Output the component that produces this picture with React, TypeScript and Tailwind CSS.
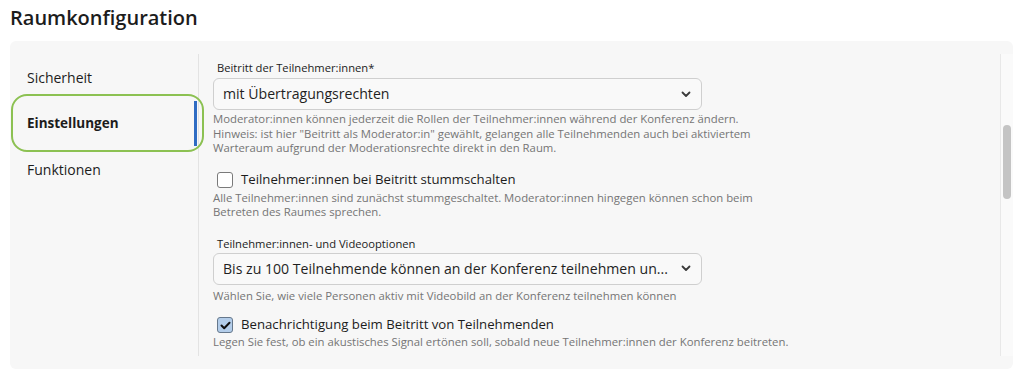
import React from 'react';

const font = { fontFamily: '"Open Sans", "Noto Sans", sans-serif' };

const Chevron = () => (
  <svg width="10" height="7" viewBox="0 0 10 7" fill="none" className="shrink-0">
    <path d="M1.5 1.5L5 5L8.5 1.5" stroke="#3a3a3a" strokeWidth="1.8" strokeLinecap="round" strokeLinejoin="round" />
  </svg>
);

const Select = ({ value }: { value: string }) => (
  <div className="w-[489px] h-[32px] rounded-[6px] border border-[#cfcfcf] bg-[#f9f9f9] flex items-center justify-between pl-[9px] pr-[10px]">
    <span className="text-[14.1px] text-[#1f1f1f] whitespace-nowrap">{value}</span>
    <Chevron />
  </div>
);

const Checkbox = ({ checked }: { checked?: boolean }) =>
  checked ? (
    <span className="w-[16px] h-[16px] rounded-[3px] border border-[#66788c] bg-[#b3cdea] flex items-center justify-center shrink-0">
      <svg width="11" height="9" viewBox="0 0 11 9" fill="none">
        <path d="M1.5 4.5L4.2 7.2L9.5 1.8" stroke="#111" strokeWidth="2" strokeLinecap="round" strokeLinejoin="round" />
      </svg>
    </span>
  ) : (
    <span className="w-[16px] h-[16px] rounded-[3px] border border-[#7a7a7a] bg-white shrink-0" />
  );

const Help = ({ lines }: { lines: string[] }) => (
  <div className="text-[11.35px] leading-[14.5px] text-[#757575]">
    {lines.map((l) => (
      <div key={l}>{l}</div>
    ))}
  </div>
);

export default function App() {
  return (
    <div className="w-[1024px] h-[380px] bg-white text-[#1c1c1c] overflow-hidden" style={font}>
      <h1 className="px-[10px] pt-[3px] h-[41px] text-[20px] leading-[30px] font-semibold">Raumkonfiguration</h1>
      <div className="mx-[10px] w-[1003px] h-[328px] rounded-[6px] bg-[#f7f7f7] py-[13px] flex">
        <nav className="w-[189px] border-r border-[#e3e3e3] flex flex-col pl-[7px]">
          <div className="h-[46px] flex items-center pl-[10px] text-[14px]">Sicherheit</div>
          <div className="relative h-[46px] flex items-center pl-[10px] text-[13.5px] font-bold outline-2 outline-[#8cc152] outline-offset-[4px] rounded-[10px]">
            Einstellungen
            <span className="absolute right-[1px] top-[1px] bottom-0 w-[3px] bg-[#2f6cc3]" />
          </div>
          <div className="h-[46px] flex items-center pl-[10px] text-[14px]">Funktionen</div>
        </nav>
        <main className="flex-1 pl-[14px] pt-[6px] overflow-hidden">
          <div className="pl-[4px] text-[11.2px] leading-[16px] mb-[2px]">Beitritt der Teilnehmer:innen*</div>
          <Select value="mit Übertragungsrechten" />
          <div className="mt-[2px]">
            <Help
              lines={[
                'Moderator:innen können jederzeit die Rollen der Teilnehmer:innen während der Konferenz ändern.',
                'Hinweis: ist hier "Beitritt als Moderator:in" gewählt, gelangen alle Teilnehmenden auch bei aktiviertem',
                'Warteraum aufgrund der Moderationsrechte direkt in den Raum.',
              ]}
            />
          </div>
          <div className="mt-[14px] h-[20px] flex items-center gap-[8px] pl-[4px] text-[13.2px]">
            <Checkbox />
            <span>Teilnehmer:innen bei Beitritt stummschalten</span>
          </div>
          <div className="mt-[1px]">
            <Help
              lines={[
                'Alle Teilnehmer:innen sind zunächst stummgeschaltet. Moderator:innen hingegen können schon beim',
                'Betreten des Raumes sprechen.',
              ]}
            />
          </div>
          <div className="mt-[16px] pl-[4px] text-[11.2px] leading-[16px] mb-[1px]">Teilnehmer:innen- und Videooptionen</div>
          <Select value="Bis zu 100 Teilnehmende können an der Konferenz teilnehmen un..." />
          <div className="mt-[4px]">
            <Help lines={['Wählen Sie, wie viele Personen aktiv mit Videobild an der Konferenz teilnehmen können']} />
          </div>
          <div className="mt-[12px] h-[20px] flex items-center gap-[8px] pl-[4px] text-[13.2px]">
            <Checkbox checked />
            <span>Benachrichtigung beim Beitritt von Teilnehmenden</span>
          </div>
          <div>
            <Help lines={['Legen Sie fest, ob ein akustisches Signal ertönen soll, sobald neue Teilnehmer:innen der Konferenz beitreten.']} />
          </div>
        </main>
        <div className="w-[13px] border-l border-[#e8e8e8] bg-[#fafafa] pt-[71px] flex justify-center">
          <div className="w-[8px] h-[74px] rounded-full bg-[#c4c4c4]" />
        </div>
      </div>
    </div>
  );
}
